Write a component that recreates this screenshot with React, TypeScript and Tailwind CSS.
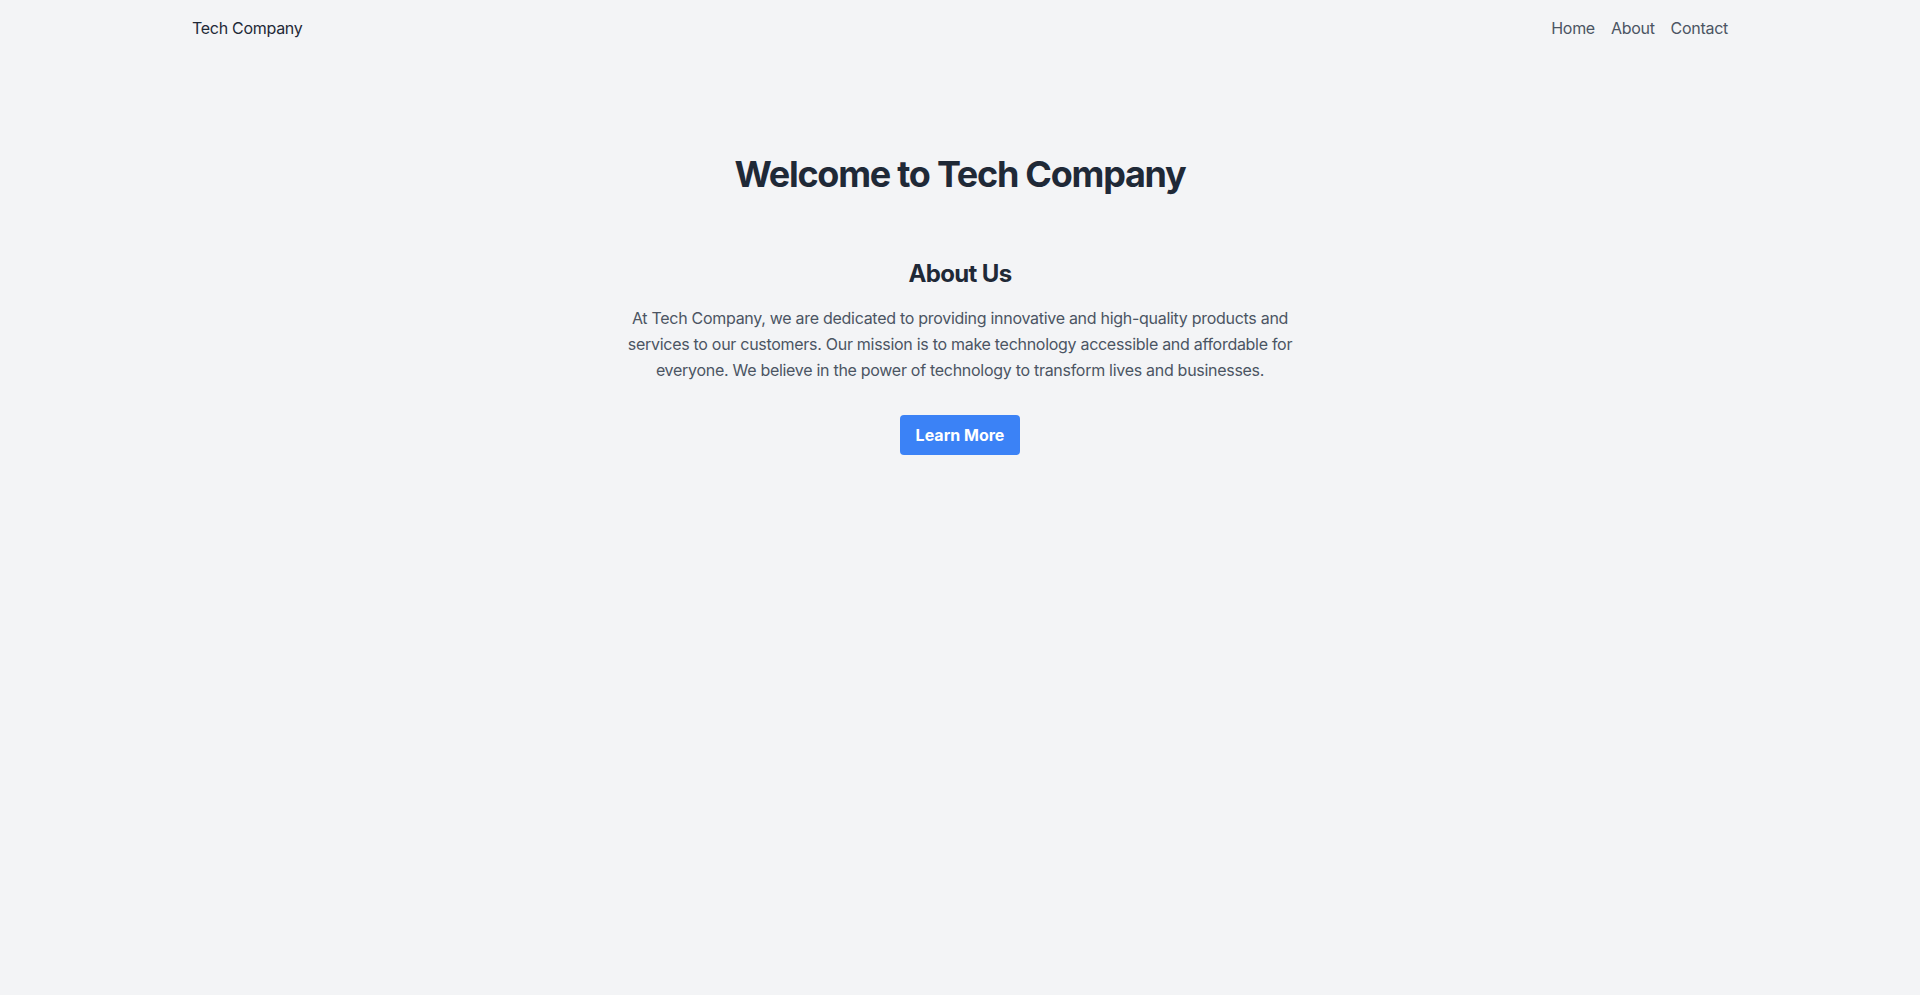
export default function App() {
  return (
    <div className="min-h-screen bg-[#f3f4f6] font-['Inter',sans-serif] tracking-[-0.018em]">
      <nav className="container mx-auto flex items-center justify-between py-4">
        <a href="#" className="text-base text-[#1f2937]">Tech Company</a>
        <div className="flex gap-4 text-base text-[#4b5563]">
          <a href="#">Home</a>
          <a href="#">About</a>
          <a href="#">Contact</a>
        </div>
      </nav>
      <main className="container mx-auto pt-[98px] pb-24 text-center">
        <h1 className="text-4xl font-bold tracking-[-0.035em] text-[#1f2937]">Welcome to Tech Company</h1>
        <section className="mt-16">
          <h2 className="mb-[15px] text-2xl font-bold tracking-[-0.026em] text-[#1f2937]">About Us</h2>
          <p className="mx-auto max-w-2xl text-base leading-relaxed text-[#4b5563]">
            At Tech Company, we are dedicated to providing innovative and high-quality products and services to our customers. Our mission is to make technology accessible and affordable for everyone. We believe in the power of technology to transform lives and businesses.
          </p>
          <button className="mt-8 rounded bg-[#3b82f6] px-4 py-2 font-bold tracking-normal text-white">Learn More</button>
        </section>
      </main>
    </div>
  );
}
